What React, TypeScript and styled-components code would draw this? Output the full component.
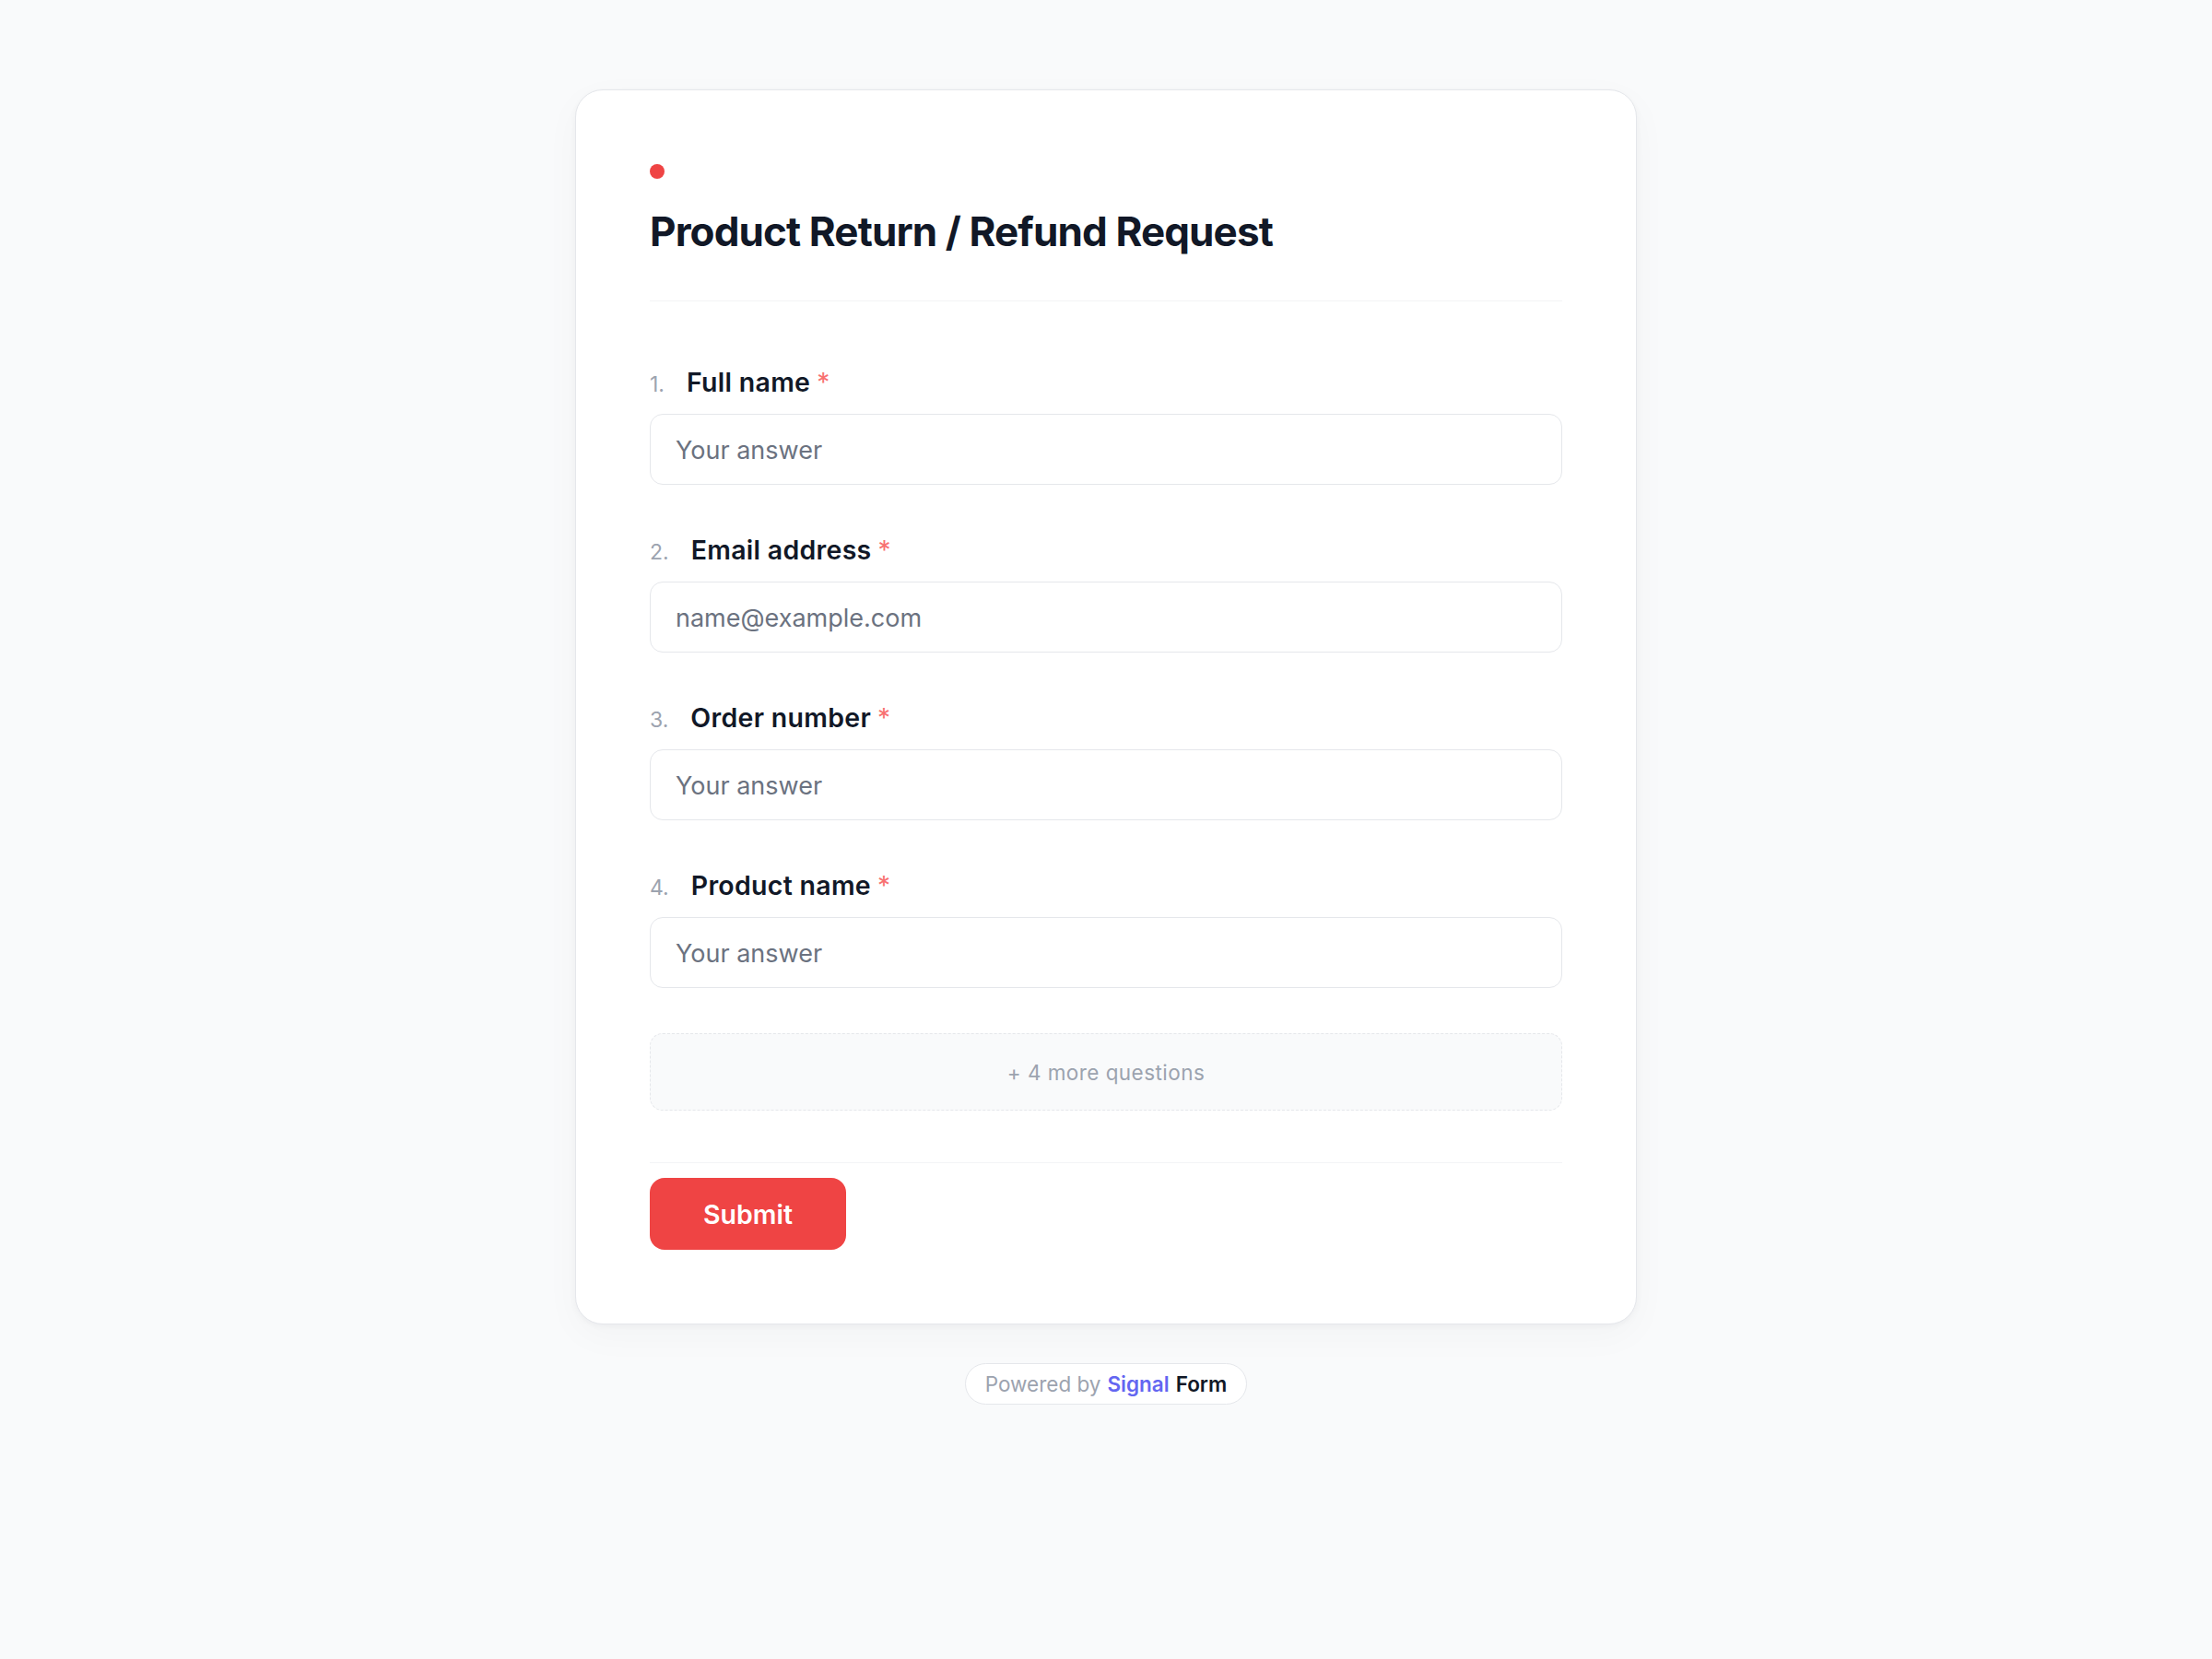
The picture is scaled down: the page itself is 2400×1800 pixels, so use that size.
import React from 'react'
import styled, { createGlobalStyle } from 'styled-components'

const GlobalStyle = createGlobalStyle`
  html, body {
    margin: 0;
    padding: 0;
    background: #f9fafb;
    font-family: Inter, "Noto Sans", "Liberation Sans", sans-serif;
    color: #111827;
  }
  * {
    box-sizing: border-box;
  }
`

const Page = styled.div`
  min-height: 1800px;
  padding: 97px 0 96px;
  display: flex;
  flex-direction: column;
  align-items: center;
`

const Card = styled.form`
  width: 1152px;
  background: #fff;
  border: 1.5px solid #e5e7eb;
  border-radius: 30px;
  padding: 80px;
  box-shadow: 0 2px 6px rgba(17, 24, 39, 0.04), 0 12px 40px rgba(17, 24, 39, 0.03);
`

const Header = styled.header`
  padding-bottom: 47px;
  border-bottom: 1.5px solid #f3f4f6;
`

const Dot = styled.span`
  display: block;
  width: 16px;
  height: 16px;
  border-radius: 50%;
  background: #ef4444;
  margin-bottom: 30px;
`

const Title = styled.h1`
  margin: 0;
  font-size: 44px;
  line-height: 55px;
  font-weight: 700;
  letter-spacing: -0.02em;
  color: #111827;
`

const Questions = styled.div`
  display: flex;
  flex-direction: column;
  gap: 53px;
  padding-top: 70px;
`

const Question = styled.div`
  display: flex;
  flex-direction: column;
  gap: 16px;
`

const Label = styled.label`
  display: flex;
  align-items: baseline;
  height: 36px;
  line-height: 36px;
`

const Num = styled.span`
  font-size: 23px;
  line-height: 23px;
  color: #9ca3af;
  margin-right: 24px;
`

const LabelText = styled.span`
  font-size: 28.5px;
  font-weight: 600;
  letter-spacing: 0.01em;
  color: #111827;
`

const Required = styled.span`
  font-size: 28px;
  color: #f87171;
  margin-left: 7px;
`

const Input = styled.input`
  width: 100%;
  height: 77px;
  padding: 2px 27px 0;
  border: 1.5px solid #e5e7eb;
  border-radius: 14px;
  background: #fff;
  font-family: inherit;
  font-size: 27px;
  color: #111827;
  outline: none;

  &::placeholder {
    color: #6b7280;
  }
`

const MoreBox = styled.div`
  margin-top: 49px;
  padding: 24.5px 24px;
  border: 1.5px dashed #e5e7eb;
  border-radius: 14px;
  background: #f9fafb;
  text-align: center;
  font-size: 22.5px;
  letter-spacing: 0.02em;
  line-height: 33px;
  color: #9ca3af;
`

const Footer = styled.div`
  margin-top: 56px;
  padding-top: 16px;
  border-top: 1.5px solid #f3f4f6;
`

const SubmitButton = styled.button`
  height: 78px;
  padding: 0 58px;
  border: none;
  border-radius: 16px;
  background: #ef4444;
  color: #fff;
  font-family: inherit;
  font-size: 28.5px;
  font-weight: 600;
  cursor: pointer;
`

const Badge = styled.div`
  margin-top: 42px;
  height: 45px;
  padding: 0 21px;
  display: flex;
  align-items: center;
  gap: 7px;
  border: 1.5px solid #e5e7eb;
  border-radius: 999px;
  background: #fff;
  font-size: 22.5px;
  color: #9ca3af;
`

const Brand = styled.span<{ $tone: string }>`
  font-weight: 600;
  color: ${(p) => p.$tone};
`

interface Field {
  label: string
  placeholder: string
  type?: string
}

const fields: Field[] = [
  { label: 'Full name', placeholder: 'Your answer' },
  { label: 'Email address', placeholder: 'name@example.com', type: 'email' },
  { label: 'Order number', placeholder: 'Your answer' },
  { label: 'Product name', placeholder: 'Your answer' },
]

export default function App() {
  return (
    <>
      <GlobalStyle />
      <Page>
        <Card onSubmit={(e) => e.preventDefault()}>
          <Header>
            <Dot />
            <Title>Product Return / Refund Request</Title>
          </Header>

          <Questions>
            {fields.map((f, i) => (
              <Question key={f.label}>
                <Label>
                  <Num>{i + 1}.</Num>
                  <LabelText>{f.label}</LabelText>
                  <Required>*</Required>
                </Label>
                <Input type={f.type || 'text'} placeholder={f.placeholder} />
              </Question>
            ))}
          </Questions>

          <MoreBox>+ 4 more questions</MoreBox>

          <Footer>
            <SubmitButton type="submit">Submit</SubmitButton>
          </Footer>
        </Card>

        <Badge>
          Powered by <Brand $tone="#6366f1">Signal</Brand>
          <Brand $tone="#111827">Form</Brand>
        </Badge>
      </Page>
    </>
  )
}
